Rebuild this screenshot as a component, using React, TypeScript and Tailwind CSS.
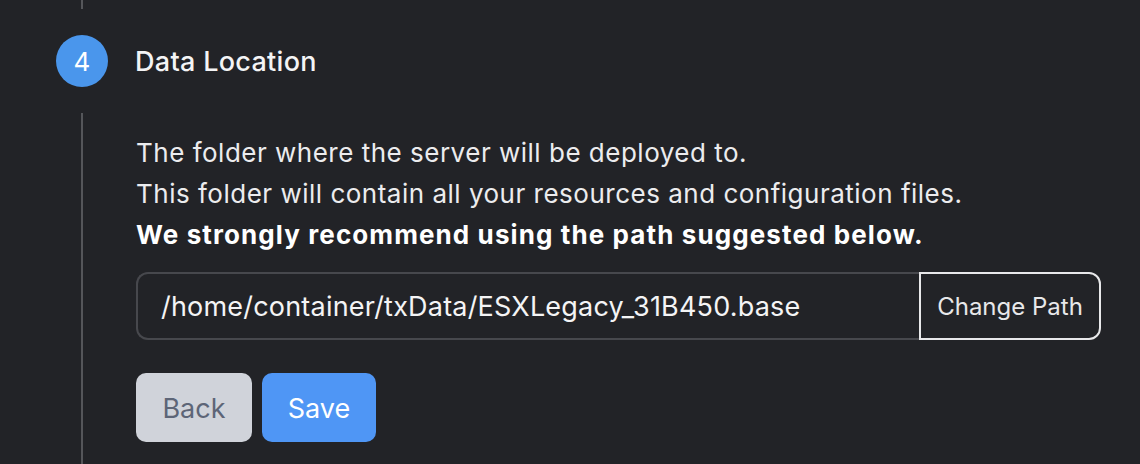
const font = { fontFamily: 'Inter, "Noto Sans", sans-serif' };

function StepBadge({ n }: { n: number }) {
  return (
    <div className="flex h-[52px] w-[52px] shrink-0 items-center justify-center rounded-full bg-[#4a96ec] text-[26px] text-white">
      {n}
    </div>
  );
}

export default function App() {
  return (
    <div className="flex h-[464px] w-[1140px] flex-col overflow-hidden bg-[#222327] text-white" style={font}>
      <div className="ml-[81px] h-[9px] w-[2px] bg-[#55565a]" />

      <div className="mt-[26px] flex items-center pl-[56px]">
        <StepBadge n={4} />
        <h2 className="ml-[27px] pt-[2px] text-[27px] font-medium tracking-[0.3px] text-[#f4f4f5]">Data Location</h2>
      </div>

      <div className="ml-[81px] mt-[26px] flex-1 border-l-2 border-[#55565a] pl-[53px] pt-[19px]">
        <div className="text-[26px] leading-[41px] tracking-[0.5px] text-[#ececee]">
          <p>The folder where the server will be deployed to.</p>
          <p>This folder will contain all your resources and configuration files.</p>
          <p className="font-bold tracking-[1.1px] text-white">We strongly recommend using the path suggested below.</p>
        </div>

        <div className="mt-[17px] flex h-[68px] w-[965px]">
          <div className="flex flex-1 items-center rounded-l-[12px] border-2 border-r-0 border-[#47484d] pl-[23px] pt-[2px] text-[27px] tracking-[0.2px] text-[#f4f4f5]">
            /home/container/txData/ESXLegacy_31B450.base
          </div>
          <button className="flex w-[182px] items-center justify-center rounded-r-[12px] border-2 border-[#e8e8ea] pt-[2px] text-[24px] text-[#e8e8ea]">
            Change Path
          </button>
        </div>

        <div className="mt-[33px] flex gap-[10px]">
          <button className="h-[69px] w-[116px] rounded-[10px] bg-[#d0d3da] pt-[3px] text-[27px] text-[#5d6577]">Back</button>
          <button className="h-[69px] w-[114px] rounded-[10px] bg-[#4f96f5] pt-[3px] text-[27px] text-white">Save</button>
        </div>
      </div>
    </div>
  );
}
